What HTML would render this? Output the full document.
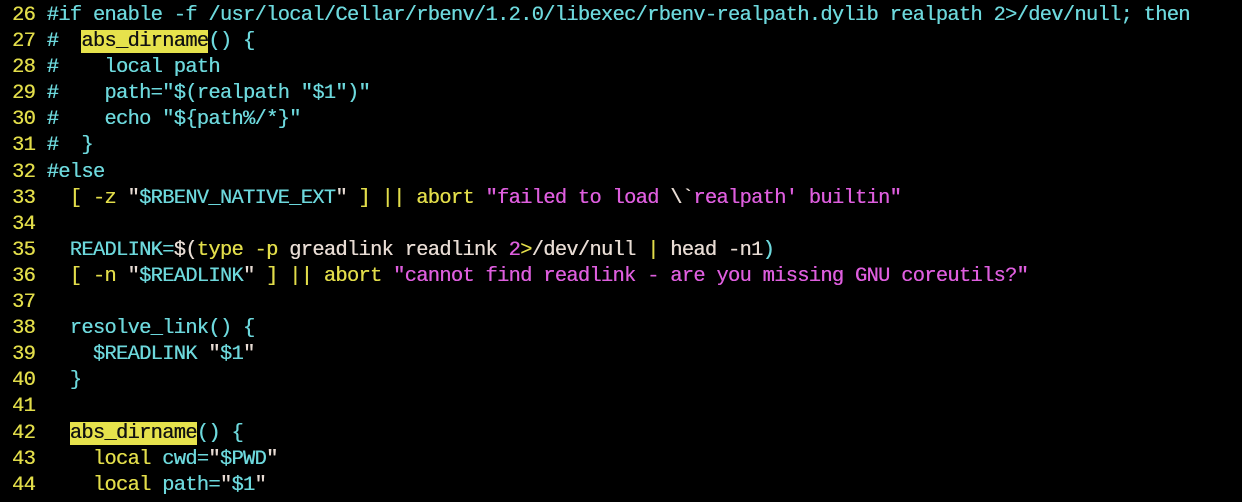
<!DOCTYPE html>
<html><head><style>
html,body{margin:0;padding:0;background:#000;width:1242px;height:502px;overflow:hidden}
pre{margin:0;position:absolute;left:12px;top:3px;font-family:"Liberation Mono",monospace;font-size:20.4px;letter-spacing:-0.69px;line-height:26.1px;color:#e8dcd4;text-shadow:0.3px 0 0 currentColor}
.n{color:#e2dd4a}.c{color:#6dd8dc}.y{color:#e2dd4a}.m{color:#de5ede}.w{color:#e8dcd4}
.h{background:#e6e24c;color:#111}
</style></head><body><pre><span class="n">26 </span><span class="c">#if enable -f /usr/local/Cellar/rbenv/1.2.0/libexec/rbenv-realpath.dylib realpath 2&gt;/dev/null; then</span>
<span class="n">27 </span><span class="c">#  <span class="h">abs_dirname</span>() {</span>
<span class="n">28 </span><span class="c">#    local path</span>
<span class="n">29 </span><span class="c">#    path="$(realpath "$1")"</span>
<span class="n">30 </span><span class="c">#    echo "${path%/*}"</span>
<span class="n">31 </span><span class="c">#  }</span>
<span class="n">32 </span><span class="c">#else</span>
<span class="n">33 </span>  <span class="y">[ -z </span><span class="w">"</span><span class="c">$RBENV_NATIVE_EXT</span><span class="w">"</span><span class="y"> ] || abort </span><span class="m">"failed to load </span><span class="w">\`</span><span class="m">realpath' builtin"</span>
<span class="n">34 </span>
<span class="n">35 </span>  <span class="c">READLINK=</span><span class="w">$(</span><span class="y">type -p</span><span class="w"> greadlink readlink </span><span class="m">2</span><span class="y">&gt;</span><span class="w">/dev/null </span><span class="y">|</span><span class="w"> head -n1</span><span class="c">)</span>
<span class="n">36 </span>  <span class="y">[ -n </span><span class="w">"</span><span class="c">$READLINK</span><span class="w">"</span><span class="y"> ] || abort </span><span class="m">"cannot find readlink - are you missing GNU coreutils?"</span>
<span class="n">37 </span>
<span class="n">38 </span>  <span class="c">resolve_link() {</span>
<span class="n">39 </span>    <span class="c">$READLINK</span> <span class="w">"</span><span class="c">$1</span><span class="w">"</span>
<span class="n">40 </span>  <span class="c">}</span>
<span class="n">41 </span>
<span class="n">42 </span>  <span class="h">abs_dirname</span><span class="c">() {</span>
<span class="n">43 </span>    <span class="y">local</span> <span class="c">cwd=</span><span class="w">"</span><span class="c">$PWD</span><span class="w">"</span>
<span class="n">44 </span>    <span class="y">local</span> <span class="c">path=</span><span class="w">"</span><span class="c">$1</span><span class="w">"</span>
</pre></body></html>
